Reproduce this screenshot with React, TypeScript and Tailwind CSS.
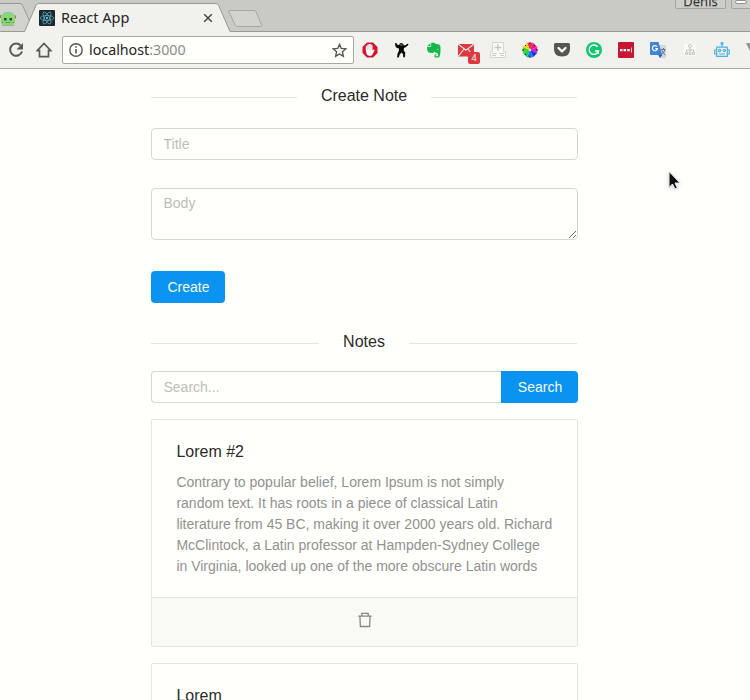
import React from "react";

const AdBlock = () => (
  <svg width="16" height="16" viewBox="0 0 16 16">
    <path d="M5 .5h6L15.500 5v6L11 15.500H5L.5 11V5z" fill="#d3122e" />
    <path d="M3.800 8V4.200q.8-1 1.400 0V2.800q.9-1.200 1.800 0v-.5q1-1 1.800 0v.7q1-1 1.700.2v5.200l1-.9q1.400-.4 1 .8l-2.300 4.600q-.4.800-1.400.8H7q-1.700 0-2.400-1.700z" fill="#fff" />
    <path d="M5.300 4v4M7.100 3v5M8.900 3v5" stroke="#e58a98" strokeWidth=".5" />
  </svg>
);

const Ninja = () => (
  <svg width="16" height="16" viewBox="0 0 16 16" fill="#080808">
    <path d="M1 1l1.500.3 1.200 1.700h1.500l.6-1.500 2-.5 1.500 1 .3 1.300 2-.1 1.600-1.500 1.300.3-.5 1.300-2 1.800-2 .8-.3 2.500 1.500 2-.2 4.900H9.300l-.3-3.300L7.500 10.500 5.700 12.500 4.800 15.500H3.200l.2-3.600 1.400-3L5 6.500 2.800 6 1.300 4z" />
    <path d="M6.400 3h2" stroke="#f1f1ed" strokeWidth=".7" />
  </svg>
);

const Evernote = () => (
  <svg width="16" height="16" viewBox="0 0 16 16">
    <path d="M4.500 1.200v3H1.200zM5.200.8h3.200l1 1 3.600.6q1.200.3 1.400 2 .5 5-.5 9-.5 2.200-2.500 2.200H10q-1.700 0-1.700-1.700 0-1.800 1.900-1.800v1.200h-.7q-.3.800.4 1h1.500q.7-.1.700-1.300-.2-2.200-1.700-2.200-1.800-.1-1.900-1.300-.9 1.700-2.300 1.600-3.200-.1-4-1.100Q.8 7.500 1 5h3.400q.8 0 .8-.9z" fill="#16b84a" />
    <path d="M10.600 7.500q1-1.600 1.800.1z" fill="#f1f1ed" />
  </svg>
);

const Mail = () => (
  <span className="relative block h-4 w-4">
    <svg width="17" height="14" viewBox="0 0 17 14" className="absolute left-0 top-0.5">
      <path d="M0 0h16v12.500H0z" fill="#de3941" />
      <path d="M.3.200L8 6.300 15.700.200M.3 12.300L5.700 5.500M10.300 5.500l5.400 6.800" fill="none" stroke="#f5eeee" strokeWidth="1.100" />
    </svg>
    <span className="absolute left-[10px] top-[10px] flex h-3 w-3 items-center justify-center rounded-[2px] bg-[#de3941] font-['Noto_Sans',sans-serif] text-[9px] leading-3 text-white">4</span>
  </span>
);

const Medical = () => (
  <svg width="16" height="16" viewBox="0 0 16 16">
    <path d="M2.500.5h11v9h2v6H.5v-6h2z" fill="#fafaf8" stroke="#d4d4d0" />
    <path d="M8 2v7M4.500 5.500h7" stroke="#c7c7c3" strokeWidth="1.400" />
    <path d="M2 11.500h5M9 11.500h5M2 13.500h4M10 13.500h4" stroke="#cdcdc9" />
  </svg>
);

const Wheel = () => (
  <svg width="16" height="16" viewBox="0 0 16 16">
    <path d="M8 8L5 .8h6z" fill="#ef2454" />
    <path d="M8 8L11 .8 15.200 5z" fill="#ee1b6c" />
    <path d="M8 8l7.200-3v6z" fill="#d61bd2" />
    <path d="M8 8l7.200 3L11 15.200z" fill="#1b39e8" />
    <path d="M8 8l3 7.200H5z" fill="#1878e9" />
    <path d="M8 8l-3 7.200L.8 11z" fill="#15ca6b" />
    <path d="M8 8L.8 11V5z" fill="#41d719" />
    <path d="M8 8L.8 5 5 .8z" fill="#f3d420" />
    <path d="M8 0v1.500M8 14.500V16M0 8h2M14 8h2M3 3l1 1M13 3l-1 1M3 13l1-1M13 13l-1-1" stroke="#222" />
    <circle cx="8" cy="8" r="1" fill="#f6eef4" />
  </svg>
);

const Pocket = () => (
  <svg width="16" height="16" viewBox="0 0 16 16">
    <path d="M1.500 1h13q1.500 0 1.500 1.500V7q0 7.500-8 7.500T0 7V2.500Q0 1 1.500 1z" fill="#555553" />
    <path d="M4.500 6L8 9.400 11.500 6" fill="none" stroke="#fff" strokeWidth="2.200" strokeLinecap="round" strokeLinejoin="round" />
  </svg>
);

const Grammarly = () => (
  <svg width="16" height="16" viewBox="0 0 16 16">
    <circle cx="8" cy="8" r="8" fill="#12c770" />
    <path d="M11.600 4.800A4.700 4.700 0 1 0 12.400 9H9M12.400 9v3" fill="none" stroke="#fff" strokeWidth="1.400" />
  </svg>
);

const LastPass = () => (
  <svg width="16" height="16" viewBox="0 0 16 16">
    <rect width="16" height="16" rx="1" fill="#ca1731" />
    <path d="M2 7h2.500v2.200H2zM5.600 7h2.500v2.200H5.600zM9.200 7h2.500v2.200H9.200zM13 5.500h.8v5H13z" fill="#fff" />
  </svg>
);

const Translate = () => (
  <svg width="16" height="16" viewBox="0 0 16 16">
    <path d="M7 3h8q1 0 1 1v11q0 1-1 1h-5z" fill="#d5d8db" />
    <path d="M1 0h7.500l3.800 13H1q-1 0-1-1V1q0-1 1-1z" fill="#3f83dc" />
    <path d="M8.300 13h4l-2.300 3z" fill="#245bad" />
    <path d="M7.100 4.700A2.600 2.600 0 1 0 7.500 6.600H5.200" fill="none" stroke="#fff" strokeWidth="1.200" />
    <path d="M11 7.500h4.500M13.400 6v1.500M14.700 8q-.8 3-3 4.500M12 8.500q1 3 3.500 4.500" fill="none" stroke="#66717d" />
  </svg>
);

const Tree = () => (
  <svg width="16" height="16" viewBox="0 0 16 16">
    <rect x="2" y="2" width="12" height="12" rx="1" fill="#fafaf7" />
    <g fill="none" stroke="#c4c4c0">
      <circle cx="8" cy="4" r="1.500" />
      <path d="M8 5.500V10M4.500 10V8h7v2" />
      <path d="M3.500 10.500h2v2h-2zM7 10.500h2v2H7zM10.500 10.500h2v2h-2z" />
    </g>
  </svg>
);

const Robot = () => (
  <svg width="16" height="16" viewBox="0 0 16 16" fill="none" stroke="#4ab2e8" strokeWidth="1.200">
    <path d="M8 5V2.500M2.700 5.200h10.600v9.200H2.700zM2.500 8H.7v4h1.800M13.500 8h1.800v4h-1.800M5 12h6" />
    <circle cx="8" cy="1.500" r="1" />
    <circle cx="5.700" cy="8.500" r="1.100" />
    <circle cx="10.300" cy="8.500" r="1.100" />
  </svg>
);

const extensions = [AdBlock, Ninja, Evernote, Mail, Medical, Wheel, Pocket, Grammarly, LastPass, Translate, Tree, Robot];

const ReactIcon = () => (
  <svg width="16" height="16" viewBox="0 0 16 16">
    <rect width="16" height="16" rx="1" fill="#20272b" />
    <g fill="none" stroke="#59bfd5" strokeWidth=".7">
      <ellipse cx="8" cy="8" rx="6.700" ry="2.500" />
      <ellipse cx="8" cy="8" rx="6.700" ry="2.500" transform="rotate(60 8 8)" />
      <ellipse cx="8" cy="8" rx="6.700" ry="2.500" transform="rotate(120 8 8)" />
    </g>
    <circle cx="8" cy="8" r="1.200" fill="#59bfd5" />
  </svg>
);

function TabStrip() {
  return (
    <div className="relative flex h-8 bg-[#c9c9c5] font-['Noto_Sans',sans-serif]">
      <svg width="750" height="32" className="absolute inset-0">
        <path d="M0 31.500V3.500H20q2 0 2.700 2L29.500 21l-5 10.500" fill="#d2d2ce" />
        <path d="M0 3.500H20q2 0 2.700 2L29.500 21" fill="none" stroke="#999995" />
        <path d="M0 31.500H750" stroke="#999995" />
        <path d="M24.500 32L36 5.500q.8-2 2.800-2H216q2 0 2.700 2L230 31.500V33H24z" fill="#f1f1ed" />
        <path d="M24.500 31.500L36 5.500q.8-2 2.800-2H216q2 0 2.700 2L230 31.500" fill="none" stroke="#999995" />
        <path d="M230 10.500h24q1.500 0 2 1.200l5.500 13q.5 1.800-1 1.800h-23q-1.500 0-2.200-1.300l-6.300-13q-.6-1.700 1-1.700z" fill="#d2d2ce" stroke="#a5a5a1" />
        <g>
          <path d="M1 15.500q1.500-2.500 5-2.500h4q3.500 0 5 2.500V22l-2 3H2l-1-3z" fill="#86d873" />
          <path d="M3 14l2-1.500h6l2 1.500" fill="none" stroke="#7cc9c0" />
          <path d="M.5 15v3M15.500 15.500v3" stroke="#e0536a" />
          <path d="M4 18h2.500v2.500H4zM9.500 18H12v2.500H9.500z" fill="#294b2b" />
          <path d="M1.500 22.500h2M12.500 22.500h2M5.500 22.500h5" stroke="#58a04e" />
          <path d="M2 25.500h12" stroke="#b8a89c" />
        </g>
      </svg>
      <div className="relative ml-[39px] flex h-8 w-[178px] items-center pt-1">
        <ReactIcon />
        <span className="-mt-0.5 ml-1.5 whitespace-nowrap text-[14.500px] leading-5 text-[#252525]">React App</span>
        <svg width="10" height="10" viewBox="0 0 10 10" className="ml-auto mr-1">
          <path d="M1.200 1.200l7.600 7.600M8.800 1.200L1.200 8.800" stroke="#454545" strokeWidth="1.500" />
        </svg>
      </div>
      <div className="absolute right-0 top-0 flex h-[9px] gap-[5px]">
        <div className="flex w-[51px] justify-center overflow-hidden rounded-b-[2px] border border-t-0 border-[#a4a4a0] bg-[#cdcdc9]">
          <span className="-mt-[8px] text-[13px] leading-[18px] text-[#333] [text-shadow:0_0_2px_#fff,0_1px_1px_#777]">Denis</span>
        </div>
        <div className="flex w-[19px] justify-center rounded-bl-[2px] border-b border-l border-[#a4a4a0] bg-[#cdcdc9]">
          <span className="h-1 w-3 rounded-sm border border-[#92928e] bg-white" />
        </div>
      </div>
    </div>
  );
}

function Toolbar() {
  return (
    <div className="flex h-[37px] items-center overflow-hidden border-b border-[#acaca8] bg-[#f1f1ed]">
      <svg width="16" height="16" viewBox="0 0 16 16" className="ml-2 shrink-0">
        <path d="M12.700 3.500A6.100 6.100 0 1 0 14 9.500" fill="none" stroke="#585856" strokeWidth="2" />
        <path d="M15 1v6.500H8.500z" fill="#585856" />
      </svg>
      <svg width="16" height="16" viewBox="0 0 16 16" className="ml-3 shrink-0">
        <path d="M1.200 8.700L8 1.400l6.800 7.300h-2.300v6h-9v-6z" fill="none" stroke="#585856" strokeWidth="1.700" />
      </svg>
      <div className="ml-[10px] flex h-7 w-[292px] shrink-0 items-center rounded-[2px] border border-[#aaa9a6] bg-[#fffffc] px-1.5">
        <svg width="14" height="14" viewBox="0 0 14 14">
          <circle cx="7" cy="7" r="6.200" fill="none" stroke="#555553" strokeWidth="1.400" />
          <path d="M7 6v4.500M7 3.200v1.600" stroke="#555553" strokeWidth="1.600" />
        </svg>
        <span className="ml-1.5 font-['Noto_Sans',sans-serif] text-[14.250px] leading-5 text-[#222]">localhost<span className="text-[#8b8b88]">:3000</span></span>
        <svg width="15" height="15" viewBox="0 0 16 16" className="ml-auto">
          <path d="M8 1.500l1.900 4.300 4.700.5-3.500 3.100 1 4.700L8 11.700l-4.100 2.400 1-4.700-3.500-3.100 4.700-.5z" fill="none" stroke="#555553" strokeWidth="1.500" />
        </svg>
      </div>
      <div className="ml-2 flex shrink-0 gap-4">
        {extensions.map((Icon, i) => (
          <span key={i} className="block h-4 w-4"><Icon /></span>
        ))}
      </div>
      <svg width="8" height="9" viewBox="0 0 8 9" className="-mt-2 ml-4 shrink-0">
        <path d="M0 1h8v8H4z" fill="#959591" />
      </svg>
    </div>
  );
}

function Divider({ children }: { children: React.ReactNode }) {
  return (
    <div className="flex h-6 gap-6 text-base leading-6 text-[#2b2b2b]">
      <span className="mt-[13px] h-px flex-1 bg-[#e4e5e1]" />
      <h2 className="whitespace-nowrap">{children}</h2>
      <span className="mr-px mt-[13px] h-px flex-1 bg-[#e4e5e1]" />
    </div>
  );
}

function Note({ title, body }: { title: string; body: string[] }) {
  return (
    <article className="h-[228px] rounded-[2px] border border-[#e4e6e1]">
      <div className="h-[177px] pl-[24.400px] pt-5">
        <h3 className="text-base leading-6 text-[#2b2b2b]">{title}</h3>
        <p className="mt-2 whitespace-nowrap text-sm leading-[21px] text-[#91918f]">
          {body.map((line) => <span key={line} className="block">{line}</span>)}
        </p>
      </div>
      <footer className="flex h-[49px] justify-center border-t border-[#e4e6e1] bg-[#f9faf6] pt-[14px]">
        <svg width="14" height="16" viewBox="0 0 14 16" fill="none" stroke="#888886" strokeWidth="1.300">
          <path d="M.3 4.100h13.400M3.800 4V1.400h6.400V4M1.900 4.200l.5 10.300h9.200l.5-10.300" />
        </svg>
      </footer>
    </article>
  );
}

export default function App() {
  return (
    <div className="h-[700px] w-[750px] overflow-hidden bg-[#fffffc] font-['Liberation_Sans',Arial,sans-serif]">
      <TabStrip />
      <Toolbar />
      <main className="ml-[151px] w-[427px] pt-[15px]">
        <Divider>Create Note</Divider>
        <input placeholder="Title" className="mt-5 block h-8 w-full rounded border border-[#d6d8d4] px-[11.500px] text-sm placeholder:text-[#bdbdba]" />
        <textarea placeholder="Body" className="mt-7 block h-[52px] w-full resize-y rounded border border-[#d6d8d4] px-[11.500px] py-1 text-sm leading-[21px] placeholder:text-[#bdbdba]" />
        <button className="mt-[31px] block h-8 w-[74px] rounded bg-[#0b93f2] pl-px text-sm text-[#f5fcff]">Create</button>
        <div className="mt-[27px]"><Divider>Notes</Divider></div>
        <div className="mt-[17px] flex">
          <input placeholder="Search..." className="h-8 w-[350px] rounded-l border border-r-0 border-[#d6d8d4] px-[11.500px] text-sm placeholder:text-[#bdbdba]" />
          <button className="h-8 w-[77px] rounded-r bg-[#0b93f2] pl-px text-sm text-[#f5fcff]">Search</button>
        </div>
        <div className="mt-4 flex flex-col gap-4">
          <Note
            title="Lorem #2"
            body={[
              "Contrary to popular belief, Lorem Ipsum is not simply",
              "random text. It has roots in a piece of classical Latin",
              "literature from 45 BC, making it over 2000 years old. Richard",
              "McClintock, a Latin professor at Hampden-Sydney College",
              "in Virginia, looked up one of the more obscure Latin words",
            ]}
          />
          <Note title="Lorem" body={[]} />
        </div>
      </main>
      <svg width="14" height="20" viewBox="0 0 14 20" className="absolute left-[668px] top-[170px] drop-shadow-sm">
        <path d="M1 1.500v16l3.500-3.500 2.500 5 2.300-1.100-2.300-4.900h5z" fill="#111" stroke="#eee" />
      </svg>
    </div>
  );
}
